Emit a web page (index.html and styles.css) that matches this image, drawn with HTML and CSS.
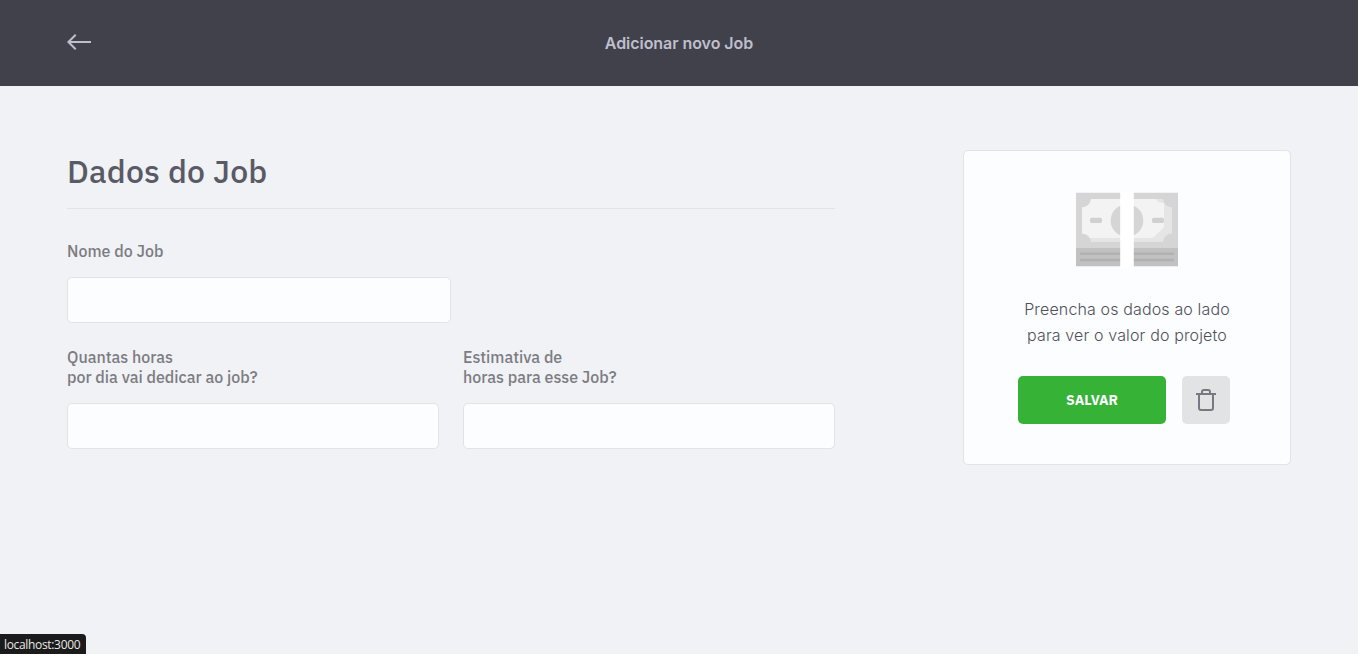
FILE: index.html
```html
<!DOCTYPE html>
<html lang="pt-BR">
<head>
<meta charset="utf-8">
<title>Adicionar novo Job</title>
<link rel="stylesheet" href="styles.css">
</head>
<body>
<header class="page-header">
  <div class="container header-row">
    <a class="back" href="#" aria-label="Voltar">
      <svg width="24" height="16" viewBox="0 0 24 16" fill="none" stroke="#bfbfcc" stroke-width="2"><path d="M24 8H1.500M8.700.700L1.400 8l7.300 7.300"/></svg>
    </a>
    <h1 class="page-title">Adicionar novo Job</h1>
  </div>
</header>
<main class="container content">
  <form class="job-form">
    <h2 class="legend">Dados do Job</h2>
    <div class="field name-field">
      <label class="label" for="name">Nome do Job</label>
      <input class="input" id="name" type="text">
    </div>
    <div class="field-row">
      <div class="field">
        <label class="label" for="daily">Quantas horas<br>por dia vai dedicar ao job?</label>
        <input class="input" id="daily" type="text">
      </div>
      <div class="field">
        <label class="label" for="total">Estimativa de<br>horas para esse Job?</label>
        <input class="input" id="total" type="text">
      </div>
    </div>
  </form>
  <aside class="card">
    <svg class="money" width="102" height="76" viewBox="0 -1 102 76">
      <path fill="#d5d5d5" d="M0-.300h102V55H0z"/>
      <path fill="#c1c1c1" d="M0 55h102v18.200H0z"/>
      <path fill="#e5e5e5" d="M15 6h72a9 9 0 0 0 9 8.500v26a9 9 0 0 0-9 8.500H15a9 9 0 0 0-9-8.500v-26A9 9 0 0 0 15 6z"/>
      <path fill="#f3f3f3" d="M15 6h65c1 3 4 4 8 4v22c0 3-2 4-4 6l-5 5c-1 1-2 2-5 2H14c-2-3-4-4-8-4.500v-26A9 9 0 0 0 15 6z"/>
      <circle cx="51" cy="27.500" r="16.300" fill="#d5d5d5"/>
      <g fill="#d0d0d0"><rect x="14" y="24.700" width="12" height="5.300" rx="1.800"/><rect x="76" y="24.700" width="12" height="5.300" rx="1.800"/></g>
      <g fill="#b1b1b1"><rect x="4" y="59.500" width="94" height="2.600" rx="1"/><rect x="4" y="65.700" width="94" height="2.600" rx="1"/></g>
      <path fill="#fff" d="M44.200-1h13.600v76H44.200z"/>
    </svg>
    <p class="hint">Preencha os dados ao lado<br>para ver o valor do projeto</p>
    <div class="actions">
      <button class="button save" type="button">SALVAR</button>
      <button class="button remove" type="button" aria-label="Excluir">
        <svg width="20" height="22" viewBox="0 0 20 22" fill="none" stroke="#787880" stroke-width="2"><path d="M0 5h20M3 5v14q0 2 2 2h10q2 0 2-2V5M6 5V3q0-2 2-2h4q2 0 2 2v2"/></svg>
      </button>
    </div>
  </aside>
</main>
<div class="status">localhost:3000</div>
</body>
</html>
```
FILE: styles.css
```css
* { box-sizing: border-box; margin: 0; padding: 0; }
body { height: 654px; overflow: hidden; background: #f0f2f5; font-family: "IBM Plex Sans", Roboto, sans-serif; }
.container { width: 1224px; margin: 0 auto; }
.page-header { height: 86px; background: #41414c; }
.header-row { height: 86px; display: grid; grid-template-columns: 24px 1fr 24px; align-items: center; }
.back { display: flex; height: 18px; }
.page-title { text-align: center; font: 600 16px/26px Inter, sans-serif; letter-spacing: -.05px; color: #bfbfcc; }
.content { display: flex; justify-content: space-between; align-items: flex-start; padding-top: 64px; }
.job-form { width: 768px; }
.legend { height: 59px; border-bottom: 1px solid #e1e3e5; font-size: 32px; line-height: 42px; font-weight: 500; letter-spacing: .2px; color: #5a5a66; }
.name-field { width: 384px; margin-top: 32px; }
.field { display: flex; flex-direction: column; gap: 16px; }
.field-row { display: grid; grid-template-columns: 1fr 1fr; gap: 24px; margin-top: 24px; }
.label { font-size: 16px; line-height: 20px; font-weight: 500; color: #7c7c82; }
.input { width: 100%; height: 46px; padding: 0 24px; background: #fcfdff; border: 1px solid #e1e3e5; border-radius: 5px; }
.card { width: 328px; height: 315px; display: flex; flex-direction: column; align-items: center; padding-top: 41px; background: #fcfdff; border: 1px solid #e1e3e5; border-radius: 5px; }
.money { display: block; }
.hint { margin-top: 28px; text-align: center; font: 300 16px/26px Inter, sans-serif; letter-spacing: .14px; color: #50505a; }
.actions { display: flex; gap: 16px; margin: 28px 6px 0 0; }
.button { display: flex; align-items: center; justify-content: center; height: 48px; border: 0; border-radius: 5px; }
.save { width: 148px; background: #36b236; color: #fcfdff; font: 700 14px/26px "IBM Plex Sans", Roboto, sans-serif; }
.remove { width: 48px; background: #e1e3e5; }
.status { position: absolute; left: 0; bottom: 0; width: 86px; height: 20px; padding-left: 4px; background: #1b1b1b; border-radius: 0 4px 0 0; color: #e8e8e8; font: 12px/21px "Open Sans", sans-serif; letter-spacing: -.33px; }
```
